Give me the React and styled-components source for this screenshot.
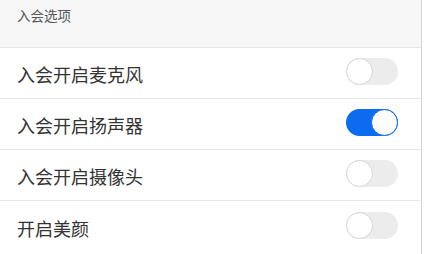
import React, { useState } from "react";
import styled, { createGlobalStyle } from "styled-components";

const GlobalStyle = createGlobalStyle`
  html, body {
    margin: 0;
    padding: 0;
    background: #ffffff;
    font-family: "Noto Sans CJK SC", "Noto Sans", sans-serif;
  }
`;

const options = [
  { id: "mic", label: "入会开启麦克风", on: false },
  { id: "speaker", label: "入会开启扬声器", on: true },
  { id: "camera", label: "入会开启摄像头", on: false },
  { id: "beauty", label: "开启美颜", on: false },
];

export default function App() {
  const [state, setState] = useState(
    Object.fromEntries(options.map((o) => [o.id, o.on]))
  );

  const toggle = (id) => setState((s) => ({ ...s, [id]: !s[id] }));

  return (
    <>
      <GlobalStyle />
      <Page>
        <SectionHeader>入会选项</SectionHeader>
        <List>
          {options.map((o) => (
            <Row key={o.id}>
              <Label>{o.label}</Label>
              <Switch $on={state[o.id]} onClick={() => toggle(o.id)}>
                <Knob $on={state[o.id]} />
              </Switch>
            </Row>
          ))}
        </List>
      </Page>
    </>
  );
}

const Page = styled.div`
  width: 421px;
  height: 254px;
  border-right: 1px solid #d4d4d4;
  background: #ffffff;
  overflow: hidden;
`;

const SectionHeader = styled.div`
  height: 48px;
  box-sizing: border-box;
  padding: 5px 0 0 17px;
  background: #f7f7f7;
  border-bottom: 1px solid #e6e6e6;
  font-size: 13.5px;
  color: #555555;
  line-height: 20px;
`;

const List = styled.div`
  display: flex;
  flex-direction: column;
`;

const Row = styled.div`
  height: 51px;
  box-sizing: border-box;
  display: flex;
  align-items: center;
  justify-content: space-between;
  padding: 0 23px 0 17px;
  border-bottom: 1px solid #e8e8e8;
  &:last-child {
    border-bottom: none;
  }
`;

const Label = styled.span`
  font-size: 18px;
  color: #333333;
  margin-top: 2px;
`;

const Switch = styled.div`
  position: relative;
  width: 52px;
  height: 27px;
  border-radius: 14px;
  background: ${(p) => (p.$on ? "#0b6cf0" : "#ececec")};
  cursor: pointer;
  margin-top: -3px;
`;

const Knob = styled.div`
  position: absolute;
  top: 0;
  left: ${(p) => (p.$on ? "25px" : "0")};
  width: 27px;
  height: 27px;
  box-sizing: border-box;
  border-radius: 50%;
  background: #ffffff;
  border: 1.5px solid ${(p) => (p.$on ? "#0b6cf0" : "#d5d5d5")};
`;
